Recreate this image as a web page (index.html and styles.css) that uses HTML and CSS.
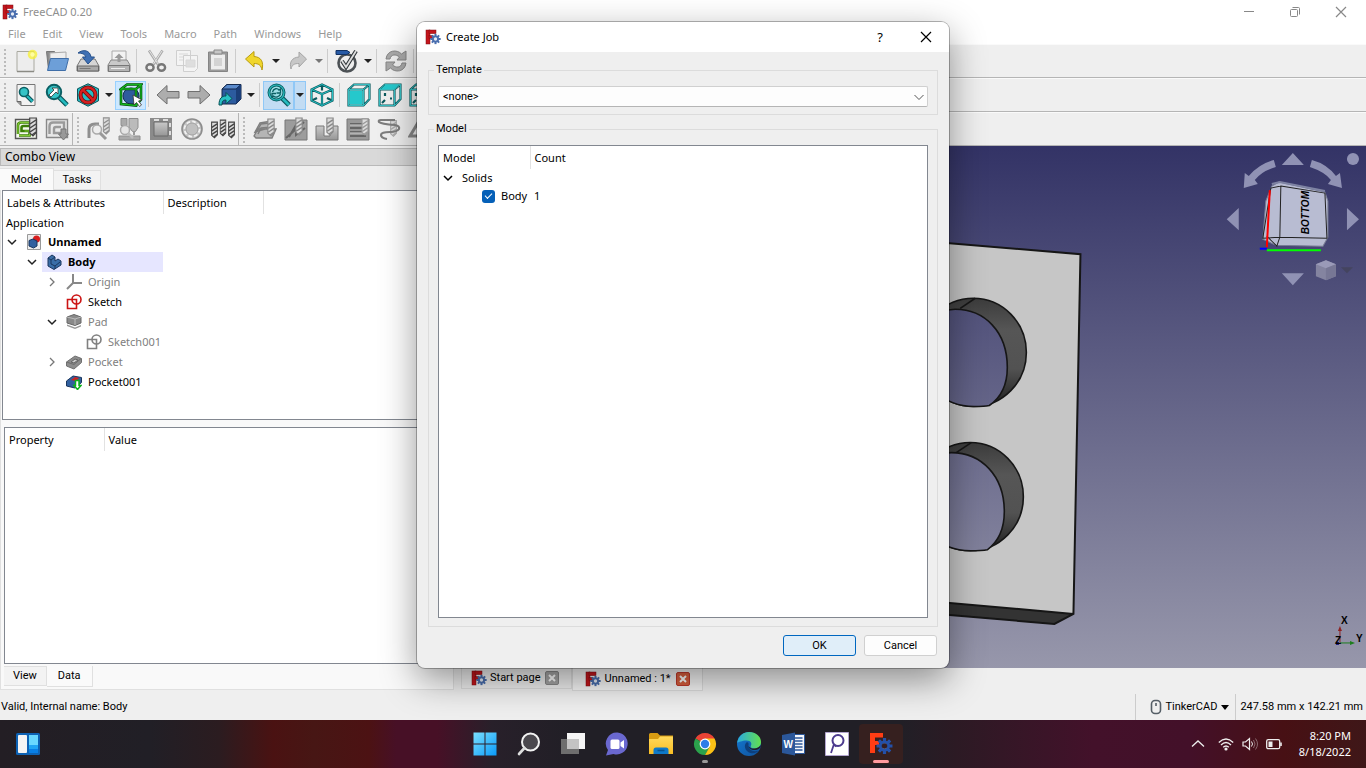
FILE: index.html
```html
<!DOCTYPE html>
<html lang="en">
<head>
<meta charset="utf-8">
<title>FreeCAD 0.20</title>
<link rel="stylesheet" href="styles.css">
</head>
<body>
<svg class="defs" aria-hidden="true">
  <defs>
    <linearGradient id="sky" gradientUnits="userSpaceOnUse" x1="0" y1="146" x2="0" y2="667"><stop offset="0" stop-color="#333366"/><stop offset="1" stop-color="#9797ab"/></linearGradient>
    <linearGradient id="wall" x1="0" y1="0" x2="0" y2="1"><stop offset="0" stop-color="#3c3c3c"/><stop offset=".3" stop-color="#565656"/><stop offset=".65" stop-color="#525252"/><stop offset="1" stop-color="#1e1e1e"/></linearGradient>
    <linearGradient id="win" x1="0" y1="0" x2="1" y2="1"><stop offset="0" stop-color="#7be0ff"/><stop offset="1" stop-color="#0a9af8"/></linearGradient>
    <linearGradient id="edgeA" x1="0" y1="0" x2="1" y2="0"><stop offset="0" stop-color="#2aa9e0"/><stop offset="1" stop-color="#62e04e"/></linearGradient>
    <linearGradient id="edgeB" x1="0" y1="0" x2="1" y2="1"><stop offset="0" stop-color="#1378d2"/><stop offset="1" stop-color="#10529c"/></linearGradient>
    <linearGradient id="folder" x1="0" y1="0" x2="0" y2="1"><stop offset="0" stop-color="#ffd95c"/><stop offset="1" stop-color="#f9bd23"/></linearGradient>
    <linearGradient id="gray" x1="0" y1="0" x2="0" y2="1"><stop offset="0" stop-color="#c9c9c9"/><stop offset="1" stop-color="#969696"/></linearGradient>
    <symbol id="gear" viewBox="0 0 16 16">
      <g stroke-width="3"><path d="M8 .5v15M.5 8h15M2.7 2.7l10.6 10.6M13.3 2.7L2.7 13.3"/></g>
      <circle cx="8" cy="8" r="5.2" fill="currentColor" stroke="none"/><circle cx="8" cy="8" r="2.4" fill="#e8edf6" stroke="none"/>
    </symbol>
    <symbol id="logo" viewBox="0 0 16 16">
      <g fill="#c4161c" stroke="#7d0b10" stroke-width=".5"><rect x="1" y="1" width="4" height="14"/><rect x="4" y="1" width="7" height="3.6"/><rect x="4" y="6.5" width="4" height="3"/></g>
      <use href="#gear" x="5" y="4.500" width="11" height="11" color="#4a6faf" stroke="#4a6faf"/>
    </symbol>
    <symbol id="mill" viewBox="0 0 8 20"><path d="M.7 1h6.600v14.500L4 19 .7 16z" fill="#dcdcdc" stroke="currentColor" stroke-width="1.200"/><path d="M1 7l6-4M1 11l6-4M1 15l6-4M3 18l4-3" stroke="currentColor" stroke-width="1.500"/></symbol>
    <symbol id="cubewire" viewBox="0 0 24 24"><path d="M1.500 6.500L12 1.500l10.500 5v11L12 22.500l-10.500-5zM1.500 6.500L12 11l10.500-4.500M12 11v11.500M12 1.500v6M3 17l4-2M21 17l-4-2" fill="none" stroke="#0b5a5e" stroke-width="2.200"/><path d="M1.500 6.500L12 1.500l10.500 5v11L12 22.500l-10.500-5zM1.500 6.500L12 11l10.500-4.500M12 11v11.500" fill="none" stroke="#25c0c4" stroke-width="1"/></symbol>
    <symbol id="boxwire" viewBox="0 0 24 24"><path d="M1.500 6.500L7 1.500h15.500v14.500l-6 6.500h-15zM1.500 6.500h15M16.500 6.500l6-5M16.500 6.500v16M7 10v3M4 20l3-3M12 15.500h2" fill="none" stroke="#0b5a5e" stroke-width="2.200"/><path d="M1.500 6.500L7 1.500h15.500v14.500l-6 6.500h-15zM1.500 6.500h15M16.500 6.500l6-5M16.500 6.500v16" fill="none" stroke="#35bcc0"/></symbol>
    <symbol id="sketch" viewBox="0 0 16 16"><path d="M1.500 5.500h9v9h-9z" fill="none" stroke="currentColor" stroke-width="1.600"/><circle cx="10.500" cy="5.500" r="4.500" fill="none" stroke="currentColor" stroke-width="1.600"/></symbol>
    <symbol id="chev-d" viewBox="0 0 10 10"><path d="M1 3l4 4 4-4" fill="none" stroke="currentColor" stroke-width="1.500"/></symbol>
    <symbol id="chev-r" viewBox="0 0 10 10"><path d="M3 1l4 4-4 4" fill="none" stroke="currentColor" stroke-width="1.300"/></symbol>
    <symbol id="close" viewBox="0 0 12 12"><path d="M1 1l10 10M11 1L1 11" stroke="currentColor" stroke-width="1.200"/></symbol>
    <symbol id="cross" viewBox="0 0 12 12"><path d="M1.500 1.500l9 9M10.500 1.500l-9 9" stroke="currentColor" stroke-width="3"/></symbol>
  </defs>
</svg>

<div class="app">
  <header class="titlebar">
    <svg class="i16"><use href="#logo"/></svg><span>FreeCAD 0.20</span>
    <div class="winbtns">
      <button type="button" aria-label="Minimize"><svg class="i12" viewBox="0 0 12 12"><path d="M1 5.500h10" stroke="currentColor"/></svg></button>
      <button type="button" aria-label="Restore"><svg class="i12" viewBox="0 0 12 12"><rect x="1.500" y="3.500" width="7" height="7" rx="1" fill="none" stroke="currentColor"/><path d="M3.500 1.500h6a1 1 0 0 1 1 1v6" fill="none" stroke="currentColor"/></svg></button>
      <button type="button" aria-label="Close"><svg class="i12"><use href="#close"/></svg></button>
    </div>
  </header>
  <nav class="menubar">
    <a href="#">File</a><a href="#">Edit</a><a href="#">View</a><a href="#">Tools</a><a href="#">Macro</a><a href="#">Path</a><a href="#">Windows</a><a href="#">Help</a>
  </nav>

  <div class="toolbar">
    <i class="grip"></i>
    <button type="button" aria-label="New"><svg viewBox="0 0 24 24"><path d="M3 2.500h17v20H3z" fill="#ededed" stroke="#a9a9a0"/><path d="M3 22.500h17" stroke="#8b8b84" stroke-width="1.500"/><circle cx="18.500" cy="5.500" r="4.800" fill="#f7f02e" opacity=".75"/><circle cx="18.500" cy="5.500" r="2.200" fill="#fffda0"/></svg></button>
    <button type="button" aria-label="Open"><svg viewBox="0 0 24 24"><path d="M1.500 2.500h8l1 1.500h10v16.500h-17z" fill="#8c8c8c" stroke="#777"/><path d="M5 4l16-1v9H5z" fill="#eee" stroke="#aaa"/><path d="M5.500 9.500h18l-3 12h-18z" fill="#6d9fd8" stroke="#3f6ea8"/></svg></button>
    <button type="button" aria-label="Save"><svg viewBox="0 0 24 24"><path d="M5 10h14l4 7v5H1v-5z" fill="#d5d5d5" stroke="#777"/><path d="M1.500 17h21v5h-21z" fill="#a9a9a9" stroke="#666"/><path d="M3.500 19.500h11" stroke="#777"/><path d="M2 4c5-4 12-3 13 4h3.500L12 15 6.500 8H10c-1-3-4-4-8-4z" fill="#3f70b4" stroke="#25508c"/></svg></button>
    <button type="button" aria-label="Print"><svg viewBox="0 0 24 24"><path d="M5 2h14v11H5z" fill="#f3f3f3" stroke="#aaa"/><path d="M4 11h16l3 5v6.500H1V16z" fill="#c9c9c9" stroke="#888"/><path d="M1.500 16.500h21v6h-21z" fill="#b4b4b4" stroke="#777"/><path d="M4 19.500h14" stroke="#eee"/><path d="M10.500 13V9H7.500L12 4.500 16.500 9h-3v4z" fill="#999"/></svg></button>
    <i class="sep"></i>
    <button type="button" aria-label="Cut"><svg viewBox="0 0 24 24"><path d="M5 1.500l9 14M18.500 1.500l-9 14" stroke="#aaa" stroke-width="2.600"/><path d="M5.500 2l8.500 13M18 2L9.500 15" stroke="#e5e5e5"/><g fill="none" stroke="#777" stroke-width="2.400"><ellipse cx="6" cy="18.500" rx="3.600" ry="3.200"/><ellipse cx="17.500" cy="18.500" rx="3.600" ry="3.200"/></g></svg></button>
    <button type="button" aria-label="Copy"><svg viewBox="0 0 24 24"><path d="M1.500 1.500h14v15h-14zM8.500 6.500h14v13l-3 3h-11z" fill="#f4f4f4" stroke="#cfcfcf"/><path d="M4 5h9M4 8h4M4 11h4M11 11h9v7h-9z" stroke="#d8d8d8" fill="#dedede"/></svg></button>
    <button type="button" aria-label="Paste"><svg viewBox="0 0 24 24"><path d="M2.500 3h19v19.500h-19z" fill="#9a9a9a" stroke="#858585"/><path d="M5 5.500h14v15H5z" fill="#ededed"/><path d="M8 1h8v4H8z" fill="#c6c6c6" stroke="#888"/><path d="M8 9h8v8H8z" fill="#d3d3d3"/></svg></button>
    <i class="sep"></i>
    <button type="button" aria-label="Undo"><svg viewBox="0 0 24 24"><path d="M2.500 10L11 2.500v5c7 .5 10 5 8 13.500-1-5-3.500-6.500-8-6.500V18z" fill="#f0d62c" stroke="#b89c10"/></svg></button><button type="button" class="drop" aria-label="Undo list"></button>
    <button type="button" aria-label="Redo"><svg viewBox="0 0 24 24"><path d="M20.500 10L13 3v5c-7 .5-10 5-8 12 1-4.500 3.500-5.500 8-5.500V18z" fill="#c7c7c7" stroke="#a5a5a5"/></svg></button><button type="button" class="drop dim" aria-label="Redo list"></button>
    <i class="sep"></i>
    <button type="button" aria-label="Path check"><svg viewBox="0 0 24 24"><circle cx="12" cy="14" r="8.500" fill="#eee" stroke="#4c5155" stroke-width="2.600"/><path d="M1 1.500h11l3 2-3 2H1z" fill="#2659a5" stroke="#123263"/><path d="M7 12l4 6L21 2" fill="none" stroke="#30363a" stroke-width="4"/><path d="M7 12l4 6L21 2" fill="none" stroke="#ddd" stroke-width="1.800"/></svg></button><button type="button" class="drop" aria-label="Check options"></button>
    <i class="sep"></i>
    <button type="button" aria-label="Refresh"><svg viewBox="0 0 24 24"><path d="M2 10C3 1 13 0 17.500 5L22 2v9h-9l2.500-3C12 5 7 5 6 10zM22 14c-1 9-11 10-15.500 5L2 22v-9h9l-2.500 3c3.500 3 8.500 3 9.500-2z" fill="#a9a9a9" stroke="#858585"/></svg></button>
    <i class="sep"></i>
  </div>

  <div class="toolbar">
    <i class="grip"></i>
    <button type="button" aria-label="Fit all"><svg viewBox="0 0 24 24"><path d="M3 1.500h18v21H7l-4-4z" fill="#f2f2f2" stroke="#777"/><path d="M3 18.500h4v4" fill="#999" stroke="#666"/><path d="M12.500 12.500l6 6" stroke="#0a5257" stroke-width="4"/><path d="M12.500 12.500l6 6" stroke="#24b9bd" stroke-width="2"/><circle cx="10" cy="9" r="4.500" fill="#35c3c6" stroke="#0a5f63" stroke-width="1.600"/></svg></button>
    <button type="button" aria-label="Fit selection"><svg viewBox="0 0 24 24"><path d="M13 13l9 9" stroke="#0a5257" stroke-width="5"/><path d="M13 13l9 9" stroke="#24b9bd" stroke-width="2.600"/><circle cx="9" cy="9" r="7.200" fill="#35c3c6" stroke="#0a5f63" stroke-width="2"/><path d="M4 12l5-5-2-2h6v6l-2-2-5 5z" fill="#fff" stroke="#333" stroke-width=".8"/></svg></button>
    <button type="button" aria-label="Draw style"><svg viewBox="0 0 24 24"><path d="M12 .8l10.500 5v12L12 23.200 1.500 17.800v-12z" fill="#28bcc4" stroke="#0a5257"/><circle cx="12" cy="12" r="7.500" fill="none" stroke="#6b0909" stroke-width="4"/><path d="M6.700 6.700l10.600 10.600" stroke="#6b0909" stroke-width="4"/><circle cx="12" cy="12" r="7.500" fill="none" stroke="#d62020" stroke-width="2.400"/><path d="M6.700 6.700l10.600 10.600" stroke="#d62020" stroke-width="2.400"/></svg></button><button type="button" class="drop" aria-label="Draw style list"></button>
    <button type="button" class="on light" aria-label="Bounding box"><svg viewBox="0 0 24 24"><circle cx="12" cy="13" r="8" fill="#2f5b9d" stroke="#142c55"/><path d="M2 6l6-4.500h14L17 6zM2 6v15l15 1.500V6M22 1.500v15l-5 6" fill="none" stroke="#063f0a" stroke-width="2.600"/><path d="M2 6l6-4.500h14L17 6zM2 6v15l15 1.500V6M22 1.500v15l-5 6" fill="none" stroke="#12b51e" stroke-width="1.400"/><path d="M14 12l9 5-3.500 1 3 4-2 1.500-3-4-2.500 2.500z" fill="#fff" stroke="#333" stroke-width=".8"/></svg></button>
    <i class="sep"></i>
    <button type="button" aria-label="Back"><svg viewBox="0 0 24 24"><path d="M1 12l10-9.500v6h12v6.500H11v6z" fill="#adadad" stroke="#6f6f6f"/></svg></button>
    <button type="button" aria-label="Forward"><svg viewBox="0 0 24 24"><path d="M23 12L13 2.500v6H1v6.500h12v6z" fill="#adadad" stroke="#6f6f6f"/></svg></button>
    <button type="button" aria-label="Linked object"><svg viewBox="0 0 24 24"><path d="M4 6l5-4.500h14V16l-5 5H4z" fill="#2c5b9f" stroke="#14294d"/><path d="M4 6l5-4.500h14L18 6z" fill="#5a8acb" stroke="#14294d"/><path d="M18 6v15l5-5V1.500z" fill="#1b3e78"/><path d="M1 22c0-7 3-9 7-9v-3.500l6 6-6 5.500v-4c-3 0-4 1-4 5z" fill="#28c0c4" stroke="#075054"/></svg></button><button type="button" class="drop" aria-label="Link list"></button>
    <i class="sep"></i>
    <button type="button" class="on" aria-label="Zoom"><svg viewBox="0 0 24 24"><path d="M14 14l8 8" stroke="#0a5257" stroke-width="5"/><path d="M14 14l8 8" stroke="#24b9bd" stroke-width="2.600"/><circle cx="9.500" cy="9.500" r="7.500" fill="#9edfe6" stroke="#0a5f63" stroke-width="3"/><circle cx="9.500" cy="9.500" r="7.500" fill="none" stroke="#2bbcc0" stroke-width="1.200"/><path d="M5.500 9c1-4 5-4 6.500-2l1.500-1v4h-4M13.500 11c-1 3-5 4-7 2L5 14v-3.500h4" fill="none" stroke="#0a5f63" stroke-width="1.300"/></svg></button><button type="button" class="drop on" aria-label="Zoom list"></button>
    <button type="button" aria-label="Isometric"><svg><use href="#cubewire"/></svg></button>
    <i class="sep"></i>
    <button type="button" aria-label="Front"><svg viewBox="0 0 24 24"><use href="#boxwire"/><path d="M2.500 7.500h13v14h-13z" fill="#25c8cc"/></svg></button>
    <button type="button" aria-label="Top"><svg viewBox="0 0 24 24"><use href="#boxwire"/><path d="M3 6l4.500-4H21l-4.500 4z" fill="#25c8cc"/></svg></button>
    <button type="button" aria-label="Right"><svg><use href="#boxwire"/></svg></button>
  </div>

  <div class="toolbar">
    <div class="group">
      <i class="grip"></i>
      <button type="button" aria-label="Job"><svg viewBox="0 0 24 24"><path d="M1.500 2.500h21v19h-21z" fill="#f5f9ee" stroke="#555" stroke-width="1.400"/><path d="M4 17V8.500Q4 5.500 7 5.500h9v3.500H9.500q-2 0-2 2V14h8v4.500H5" fill="none" stroke="#3b7d06" stroke-width="2.600"/><path d="M4 17V8.500Q4 5.500 7 5.500h9M5 18.500h10.500V14h-5" fill="none" stroke="#80c834" stroke-width="1.200"/><use href="#mill" x="15" y="0" width="8" height="20" color="#444"/></svg></button>
      <button type="button" aria-label="Post process"><svg viewBox="0 0 24 24"><path d="M1.500 2.500h21v18h-21z" fill="#e8e8e8" stroke="#888" stroke-width="1.400"/><path d="M4.500 17V9q0-3.500 3.500-3.500h11V16H9v-4q0-2 2-2h5" fill="none" stroke="#9a9a9a" stroke-width="2.400"/><path d="M16 12h5v5h2.500L18.500 23 13.500 17H16z" fill="#999" stroke="#777"/></svg></button>
    </div>
    <div class="group">
      <i class="grip"></i>
      <button type="button" aria-label="Inspect"><svg viewBox="0 0 24 24"><path d="M2 21V12q0-5 6-5h4" fill="none" stroke="#8f8f8f" stroke-width="3"/><use href="#mill" x="15.500" y="0" width="7.500" height="18" color="#8f8f8f"/><circle cx="10" cy="12.500" r="4.500" fill="#eee" stroke="#aaa" stroke-width="1.500"/><path d="M13 16l6 6" stroke="#999" stroke-width="3"/></svg></button>
      <button type="button" aria-label="Simulator"><svg viewBox="0 0 24 24"><path d="M3 1.500h6v7H3zM1 19h21v4H1z" fill="#aaa" stroke="#8f8f8f"/><path d="M11 1.500h9v9l-2.500 4h-3L11 10z" fill="#bbb" stroke="#8f8f8f"/><path d="M16 14v4" stroke="#999" stroke-width="2"/><circle cx="7" cy="13" r="4.500" fill="#e5e5e5" stroke="#aaa" stroke-width="1.500"/><path d="M10 16l5 5" stroke="#bbb" stroke-width="2.500"/></svg></button>
      <button type="button" aria-label="Profile"><svg viewBox="0 0 24 24"><path d="M1 1h22v22H1z" fill="#8b8b8b"/><path d="M5 5h14v14H5z" fill="url(#gray)" stroke="#6b6b6b"/><path d="M5 3h5M14 3h5M21 6v4M21 14v4" stroke="#ddd" stroke-width="2"/></svg></button>
      <button type="button" aria-label="Pocket shape"><svg viewBox="0 0 24 24"><circle cx="12" cy="12" r="10" fill="#c4c4c4" stroke="#8d8d8d" stroke-width="1.600"/><circle cx="12" cy="12" r="7.500" fill="none" stroke="#f2f2f2" stroke-width="1.800" stroke-dasharray="3.600 2.290"/><circle cx="12" cy="12" r="6" fill="#c0c0c0" stroke="#a5a5a5"/></svg></button>
      <button type="button" aria-label="Drilling"><svg viewBox="0 0 24 24"><use href="#mill" x="0" y="3" width="7" height="20" color="#444"/><use href="#mill" x="8.500" y="1" width="7" height="20" color="#444"/><use href="#mill" x="17" y="3" width="7" height="20" color="#444"/></svg></button>
    </div>
    <div class="group last">
      <i class="grip"></i>
      <button type="button" aria-label="Face"><svg viewBox="0 0 24 24"><path d="M1 19l4-7h18l-4 9H3zM2 15L7 6l12-2-3 7z" fill="#b5b5b5" stroke="#7f7f7f" stroke-width="1.400"/><path d="M4 14L8 7l8-1M5 17l3-6 12-1" fill="none" stroke="#7f7f7f" stroke-width="1.400"/><use href="#mill" x="14" y="1" width="8" height="19" color="#888"/></svg></button>
      <button type="button" aria-label="Helix"><svg viewBox="0 0 24 24"><path d="M1 3h22v20H1z" fill="#9c9c9c" stroke="#777"/><path d="M2 21L20 5M5 20l7-12v10l9-7" stroke="#666" stroke-width="2" fill="none"/><use href="#mill" x="11" y="0" width="8" height="19" color="#888"/></svg></button>
      <button type="button" aria-label="Plunge"><svg viewBox="0 0 24 24"><path d="M1 9h8v10h6V9h8v14H1z" fill="url(#gray)" stroke="#777"/><use href="#mill" x="11" y="0" width="8" height="19" color="#888"/></svg></button>
      <button type="button" aria-label="Engrave"><svg viewBox="0 0 24 24"><path d="M1 2h22v21H1z" fill="#999" stroke="#777"/><path d="M4 7h13M4 11h13M4 15h16M4 19h16" stroke="#666" stroke-width="2"/><path d="M4 8h12M4 16h15" stroke="#ccc"/><use href="#mill" x="15" y="1" width="8" height="18" color="#999"/></svg></button>
      <button type="button" aria-label="Adaptive"><svg viewBox="0 0 24 24"><use href="#mill" x="13" y="2" width="7" height="19" color="#aaa"/><path d="M18 3H4q-3 0-2 2 2 2 16 3 5 1 4 4-2 3-9 3-9 0-9 3 0 3 6 4" fill="none" stroke="#7d7d7d" stroke-width="2.200"/></svg></button>
      <button type="button" aria-label="Slot"><svg viewBox="0 0 24 24"><path d="M2 19L11 4l11 15z" fill="none" stroke="#888" stroke-width="3"/></svg></button>
    </div>
  </div>

  <main class="work">
    <section class="combo">
      <h2>Combo View</h2>
      <div class="tabs"><button type="button" class="tab active">Model</button><button type="button" class="tab">Tasks</button></div>
      <div class="frame">
        <div class="box tree">
          <table>
            <colgroup><col class="c-label"><col class="c-desc"><col></colgroup>
            <thead><tr><th>Labels &amp; Attributes</th><th>Description</th><th></th></tr></thead>
            <tbody>
              <tr class="root"><td>Application</td></tr>
              <tr class="bold l0"><td><div><svg class="i10"><use href="#chev-d"/></svg><svg class="i16" viewBox="0 0 16 16"><path d="M1.500.5h13v15h-13z" fill="#eee" stroke="#999"/><circle cx="10.500" cy="5" r="3.500" fill="#d81e1e"/><path d="M3 6.500L7 5l4 2v5l-3.500 2L3 12z" fill="#31609f" stroke="#1a365e"/></svg><span>Unnamed</span></div></td></tr>
              <tr class="bold l1"><td><div><svg class="i10"><use href="#chev-d"/></svg><span class="picked"><svg class="i16" viewBox="0 0 16 16"><path d="M2 4l4-3 3 2v4l3-2 3 2v4l-7 4.500L2 12z" fill="#3a6ea8" stroke="#1a365e"/><path d="M2 4l3 2v4l4 2 5-4M9 15v-3M5 6l4-3" fill="none" stroke="#1a365e"/></svg><span>Body</span></span></div></td></tr>
              <tr class="dim l2"><td><div><svg class="i10 mid"><use href="#chev-r"/></svg><svg class="i16" viewBox="0 0 16 16"><path d="M7 0v9M7 9h9M7 9l-6 6" fill="none" stroke="#888" stroke-width="2"/></svg><span>Origin</span></div></td></tr>
              <tr class="l2"><td><div><i class="i10"></i><svg class="i16 red"><use href="#sketch"/></svg><span>Sketch</span></div></td></tr>
              <tr class="dim l2"><td><div><svg class="i10"><use href="#chev-d"/></svg><svg class="i16" viewBox="0 0 16 16"><path d="M1 3l7-2.500L15 3v6l-6 2.500L1 9z" fill="#8a8a8a" stroke="#666"/><path d="M1 3l8 2 6-2M9 5v6" fill="none" stroke="#bbb"/><path d="M1 12l8 3 6-2.500V11l-6 2.500L1 10.500z" fill="#999"/></svg><span>Pad</span></div></td></tr>
              <tr class="dim l3"><td><div><i class="i10"></i><svg class="i16"><use href="#sketch"/></svg><span>Sketch001</span></div></td></tr>
              <tr class="dim l2"><td><div><svg class="i10 mid"><use href="#chev-r"/></svg><svg class="i16" viewBox="0 0 16 16"><path d="M.5 8L9 2l6.500 2.500v4L8 15 .5 12z" fill="#8d8d8d" stroke="#707070"/><path d="M5 8l4-3 3 1-4 3z" fill="#ccc" stroke="#666"/><path d="M.5 8L8 10.500l7-6" fill="none" stroke="#6d6d6d"/></svg><span>Pocket</span></div></td></tr>
              <tr class="l2"><td><div><i class="i10"></i><svg class="i16" viewBox="0 0 16 16"><path d="M.5 7L7 2l8.500 1.500v5L9 14 .5 12z" fill="#31609f" stroke="#1a365e"/><path d="M5 6l4-3 4 1-3 3z" fill="#c22"/><path d="M9.500 6.500h3.500v5h2L11.500 15.500 8 11.500h1.500z" fill="#fff" stroke="#0db31b" stroke-width="1.500"/></svg><span>Pocket001</span></div></td></tr>
            </tbody>
          </table>
        </div>
        <div class="props">
          <div class="box">
            <table>
              <colgroup><col class="c-prop"><col></colgroup>
              <thead><tr><th>Property</th><th>Value</th></tr></thead>
            </table>
          </div>
          <div class="tabs bottom"><button type="button" class="tab">View</button><button type="button" class="tab active">Data</button></div>
        </div>
      </div>
    </section>

    <section class="mdi">
      <div class="view">
      <svg class="scene" viewBox="458 146 908 521" preserveAspectRatio="xMaxYMin slice">
        <rect x="458" y="146" width="908" height="521" fill="url(#sky)"/>
        <path d="M700 222L1081 254 1074 613 700 580z" fill="#c6c6c6"/>
        <path d="M700 580L1074 613 1055 623 700 593z" fill="#333"/>
        <path d="M700 222L1081 254 1074 613 1055 623 700 593M1074 613L700 580" fill="none" stroke="#161616" stroke-width="2"/>
        <g stroke="#161616" stroke-width="1.600">
          <ellipse cx="974" cy="352" rx="53" ry="54" fill="url(#wall)"/>
          <path d="M990 405c13-9 18-22 18-38 0-36-23-58-52-58-20 0-36 18-36 44 0 30 24 53 55 53 6 0 10 0 15-1z" fill="url(#sky)"/>
          <path d="M961 308l15-10" fill="none"/>
          <ellipse cx="971" cy="496" rx="53" ry="54" fill="url(#wall)"/>
          <path d="M988 549c12-9 17-22 17-38 0-36-23-59-53-59-20 0-36 18-36 44 0 30 24 54 55 54 6 0 12 0 17-1z" fill="url(#sky)"/>
          <path d="M957 452l15-10" fill="none"/>
        </g>
        <g fill="#9092b4">
          <path d="M1282 165h22l-11-12zM1282 273h22l-11 12zM1239 208v22l-12-11zM1347 208v22l12-11z"/>
          <circle cx="1353" cy="159" r="6"/>
          <path d="M1274 160l2 7q-14 4-21 13l3 4-14 4 1-15 4 3q10-12 25-16zM1312 160l-2 7q15 5 21 13l-3 4 14 4-2-15-4 3q-9-12-24-16z"/>
        </g>
        <path d="M1279 182l46 10 3 9v36l-5 9-47-1-13-6 3-38 6-15z" fill="#b8bcd2" stroke="#777c94"/>
        <path d="M1281 186l44 7 2 45-47-1zM1281 186l-10 2-8 50 17-1M1280 237l-3 9-10-10" fill="none" stroke="#222"/>
        <path d="M1272 184l8-2 45 9" fill="none" stroke="#7e83a3" stroke-width="2"/>
        <path d="M1270 190l-3 57" stroke="#f00" stroke-width="2"/><path d="M1267 250h54" stroke="#0f0" stroke-width="2"/><path d="M1260 248.500h7" stroke="#00f" stroke-width="2"/>
        <text class="cube-text" transform="translate(1309 234) rotate(-90)">BOTTOM</text>
        <path d="M1316 264l10-4 10 4v12l-10 4-10-4z" fill="#8484a0"/><path d="M1316 264l10-4 10 4-10 4z" fill="#9a9ab8"/><path d="M1326 268v12l10-4v-12z" fill="#777795"/>
        <path d="M1341 267h12l-6 6z" fill="#44445f"/>
        <path d="M1340 641v-12" stroke="#8c2323"/><path d="M1338 630h4l-2-5z" fill="#8c2323"/><path d="M1340 642h11" stroke="#1d7d1d"/><path d="M1350 640v4l5-2z" fill="#1d7d1d"/><rect x="1336" y="641" width="3" height="3" fill="#1c1c80"/>
        <g class="axis"><text x="1341" y="623">X</text><text x="1356" y="641">Y</text><text x="1335" y="643">Z</text></g>
      </svg>
      </div>
      <div class="doctabs">
        <div class="doctab"><svg class="i16"><use href="#logo"/></svg><span>Start page</span><button type="button" aria-label="Close Start page"><svg><use href="#cross"/></svg></button></div>
        <div class="doctab active"><svg class="i16"><use href="#logo"/></svg><span>Unnamed : 1*</span><button type="button" class="hot" aria-label="Close Unnamed"><svg><use href="#cross"/></svg></button></div>
      </div>
    </section>
  </main>

  <footer class="status">
    <span class="msg">Valid, Internal name: Body</span>
    <button type="button" class="nav"><svg viewBox="0 0 12 16"><rect x="1.500" y="1.500" width="9" height="13" rx="3.500" fill="none" stroke="#555e66" stroke-width="1.600"/><path d="M6 4v3" stroke="#555e66" stroke-width="1.600"/></svg>TinkerCAD<i class="tri"></i></button>
    <span class="dims">247.58 mm x 142.21 mm</span>
  </footer>
</div>

<dialog class="dialog" open aria-labelledby="dlg-title">
  <div class="dlg-title"><svg class="i16"><use href="#logo"/></svg><span id="dlg-title">Create Job</span>
    <button type="button" class="help">?</button><button type="button" aria-label="Close"><svg class="i12"><use href="#close"/></svg></button></div>
  <form class="dlg-body">
    <fieldset>
      <legend>Template</legend>
      <div class="select"><select aria-label="Template"><option>&lt;none&gt;</option></select><svg class="i12" viewBox="0 0 12 12"><path d="M1.500 4l4.500 4.500L10.500 4" fill="none" stroke="#555"/></svg></div>
    </fieldset>
    <fieldset class="grow">
      <legend>Model</legend>
      <div class="box">
        <table class="models">
          <colgroup><col class="c-model"><col></colgroup>
          <thead><tr><th>Model</th><th>Count</th></tr></thead>
          <tbody>
            <tr><td><div class="solids"><svg class="i10"><use href="#chev-d"/></svg><span>Solids</span></div></td><td></td></tr>
            <tr><td><label class="check"><input type="checkbox" checked><span>Body</span></label></td><td>1</td></tr>
          </tbody>
        </table>
      </div>
    </fieldset>
    <div class="actions"><button type="button" class="primary">OK</button><button type="button">Cancel</button></div>
  </form>
</dialog>

<nav class="taskbar">
  <div class="side"><button type="button" aria-label="Widgets"><svg viewBox="0 0 24 24"><rect y="1" width="24" height="22" rx="1.500" fill="#0d62b4"/><rect x="2" y="3" width="9" height="18" rx="1" fill="#f4f4f4"/><rect x="13" y="3" width="9" height="10" fill="#69d8ff"/><rect x="13" y="13" width="9" height="4" fill="#20a5f4"/><rect x="13" y="17" width="9" height="4" fill="#087fe6"/></svg></button></div>
  <div class="apps">
    <button type="button" aria-label="Start"><svg viewBox="0 0 24 24"><path d="M.5.500h11v11H.5zM12.500.500h11v11h-11zM.5 12.500h11v11H.5zM12.500 12.500h11v11h-11z" fill="url(#win)"/></svg></button>
    <button type="button" aria-label="Search"><svg viewBox="0 0 24 24"><circle cx="13.500" cy="10" r="8.500" fill="#4b484e" stroke="#f2f2f2" stroke-width="2"/><path d="M7.500 16L2 22" stroke="#ddd" stroke-width="2.600" stroke-linecap="round"/></svg></button>
    <button type="button" aria-label="Task view"><svg viewBox="0 0 24 24"><path d="M6 1h18v16H6z" fill="#f5f5f5"/><path d="M0 7h18v15H0z" fill="#777" opacity=".9"/><path d="M6 7h12v10H6z" fill="#c3c3c3"/></svg></button>
    <button type="button" aria-label="Chat"><svg viewBox="0 0 24 24"><path d="M12.500.500a11 11 0 1 1-4 21.500L1 23.500 3 18A11 11 0 0 1 12.500.500z" fill="#6a68cf"/><rect x="5.500" y="7.500" width="9" height="9.500" rx="1.500" fill="#fff"/><path d="M15.500 10.500l3.500-2.500v8.500L15.500 14z" fill="#fff"/></svg></button>
    <button type="button" aria-label="File Explorer"><svg viewBox="0 0 24 24"><path d="M0 2.500Q0 1 1.500 1h7l2.500 2.500h13V10H0z" fill="#d89c12"/><path d="M0 7h9l2-2.500h13V22H0z" fill="url(#folder)"/><path d="M4.500 22v-4q0-2.500 2.500-2.500h10q2.500 0 2.500 2.500v4z" fill="#0e79c9"/><path d="M8.500 18.500h7" stroke="#07538f" stroke-width="1.500"/></svg></button>
    <button type="button" aria-label="Chrome" class="running"><svg viewBox="0 0 24 24"><path d="M12 12L2.470 6.500A11 11 0 0 1 21.530 6.500z" fill="#ea4335"/><path d="M12 12L2.470 6.500A11 11 0 0 0 12 23l4.800-8z" fill="#2ba24c"/><path d="M12 12l4.500 3L12 23A11 11 0 0 0 21.530 6.500H12z" fill="#fbc116"/><circle cx="12" cy="12" r="5.400" fill="#fff"/><circle cx="12" cy="12" r="4.200" fill="#2f7de8"/></svg></button>
    <button type="button" aria-label="Edge"><svg viewBox="0 0 24 24"><circle cx="12" cy="12" r="12" fill="url(#edgeB)"/><path d="M.2 10.500C1.500 4 6.500 0 12 0c7 0 12 4.500 12 10 0 4-3 6.500-6.500 6.500-3 0-4.500-1.500-3.500-3 1-2 0-5-4.500-5C5 8.500 1.500 10.500.2 10.500z" fill="url(#edgeA)"/><path d="M10 10c-4 3-2 9.500 3.500 11 3.500.8 6.500-.5 8.500-2.500-6 2-10.500-1-10.500-4.500 0-2 .8-3-1.500-4z" fill="#0d3f7d"/><path d="M24 13c0 3-3 5-6.500 5s-6-2-6-4c0 0 1.500 3 6 2.500s6.500-3.500 6.500-3.500z" fill="#211f26"/></svg></button>
    <button type="button" aria-label="Word"><svg viewBox="0 0 24 24"><path d="M12 2.500h11.500v19H12z" fill="#f4f6fa" stroke="#2b579a"/><path d="M14 6h7.500M14 9h7.500M14 12h7.500M14 15h7.500M14 18h7.500" stroke="#2b579a" stroke-width="1.300"/><path d="M1 3L14 .5v23L1 21z" fill="#2b579a"/><text class="word" x="2.500" y="16">W</text></svg></button>
    <button type="button" aria-label="Finder"><svg viewBox="0 0 24 24"><path d="M.5.500h23v23H.5z" fill="#fff" stroke="#b3a5cf"/><circle cx="13" cy="8.500" r="5.500" fill="none" stroke="#4c3a8e" stroke-width="2"/><path d="M9 12l-3 9M9 13l2.500 1.500" stroke="#4c3a8e" stroke-width="1.800" fill="none"/></svg></button>
    <button type="button" aria-label="FreeCAD" class="current"><svg viewBox="0 0 24 24"><g fill="#ff3d14"><rect x="1" y="1" width="5" height="20"/><rect x="5" y="1" width="9" height="4.500"/><rect x="5" y="9" width="5" height="4"/></g><g color="#2450a8" stroke="#2450a8"><use href="#gear" x="7" y="5.500" width="17" height="17"/></g><circle cx="15.500" cy="14" r="2.800" fill="#321c22"/></svg></button>
  </div>
  <div class="tray">
    <svg class="i16" viewBox="0 0 16 16"><path d="M2 10.500l6-5.500 6 5.500" fill="none" stroke="#eee" stroke-width="1.300"/></svg>
    <svg class="i16" viewBox="0 0 16 16"><g fill="none" stroke="#eee" stroke-width="1.300"><path d="M.8 6.500q7.200-7 14.400 0M3 9q5-5 10 0M5.200 11.300q2.800-2.600 5.600 0"/></g><circle cx="8" cy="13" r="1.600" fill="#eee"/></svg>
    <svg class="i16" viewBox="0 0 16 16"><path d="M1 6h2.500L7.500 2.500v11L3.500 10H1z" fill="none" stroke="#eee" stroke-width="1.200"/><path d="M9.500 5.500q2 2.500 0 5" fill="none" stroke="#eee"/><path d="M11.500 4q3 4 0 8M13.500 2.500q4 5.500 0 11" fill="none" stroke="#8a6b70"/></svg>
    <svg class="i16" viewBox="0 0 16 16"><rect x=".7" y="3.700" width="13" height="9" rx="1.500" fill="none" stroke="#eee" stroke-width="1.300"/><rect x="2.500" y="5.500" width="4" height="5.500" fill="#eee"/><path d="M15 6.500v3.500" stroke="#eee" stroke-width="1.600"/></svg>
    <div class="clock"><div>8:20 PM</div><div>8/18/2022</div></div>
  </div>
</nav>
</body>
</html>
```
FILE: styles.css
```css
* { box-sizing: border-box; }
html, body { height: 100%; margin: 0; }
body {
  display: flex; flex-direction: column; overflow: hidden; position: relative;
  background: #efefef; color: #000;
  font: 11px/16px "Noto Sans", "Open Sans", sans-serif;
}
button { font: inherit; color: inherit; background: none; border: 0; padding: 0; margin: 0; }
.defs { position: absolute; width: 0; height: 0; }
svg { display: block; flex: none; }
.i10 { width: 10px; height: 10px; flex: none; }
.i12 { width: 12px; height: 12px; }
.i16 { width: 16px; height: 16px; }

.app { flex: 1; min-height: 0; display: flex; flex-direction: column; }

.titlebar { display: flex; align-items: center; gap: 5px; height: 23px; padding-left: 2px; background: #fff; color: #8f8f8f; }
.winbtns { margin-left: auto; display: flex; }
.winbtns button { width: 46px; height: 22px; display: grid; place-items: center; color: #888; }
.winbtns button:last-child { margin-right: 2px; }
.menubar { display: flex; gap: 17px; height: 21px; align-items: center; padding-left: 8px; background: #fff; }
.menubar a { color: #999; text-decoration: none; }

.toolbar { display: flex; height: 34px; border-top: 1px solid #fafafa; border-bottom: 1px solid #b5b5b5; align-items: center; }
.toolbar button { width: 31px; height: 29px; display: grid; place-items: center; flex: none; border: 1px solid transparent; }
.toolbar button svg { width: 24px; height: 24px; }
.toolbar .drop { width: 12px; }
.toolbar .drop::before { content: ""; border: 4px solid transparent; border-top-color: #222; border-bottom: 0; }
.toolbar .drop.dim::before { border-top-color: #777; }
.toolbar .on { background: #c2dcf3; border-color: #90c8f6; }
.toolbar .on.light { background: #cce8ff; border-color: #99d1ff; }
.grip { width: 10px; height: 27px; flex: none; background: linear-gradient(#bbb 2px, transparent 2px) 4px 1px / 2px 4px repeat-y; }
.sep { width: 6px; height: 24px; flex: none; border-left: 1px solid #ccc; margin-left: 2px; margin-right: -2px; }
.group { display: flex; align-items: center; height: 100%; border-right: 1px solid #b5b5b5; }
.group.last { border: 0; }

.work { flex: 1; min-height: 0; display: flex; gap: 4px; padding-top: 2px; }
.combo { flex: 0 0 454px; display: flex; flex-direction: column; padding-bottom: 2px; }
.combo h2 { margin: 0; font-size: 12px; font-weight: 400; line-height: 16px; background: #d9d9d9; border: 1px solid #b9b9b9; padding: 0 4px; }
.tabs { display: flex; align-items: flex-end; margin-top: 2px; }
.tab { height: 20px; padding: 0 9px; background: #f3f3f3; border: 1px solid #e0e0e0; border-left: 0; }
.tab.active { height: 22px; background: #fafafa; border-bottom: 0; padding: 0 11px; }
.tab, .doctab, .status, legend, select, .actions { font-family: Roboto, "Open Sans", sans-serif; font-size: 11px; }
.frame { flex: 1; min-height: 0; display: flex; flex-direction: column; gap: 7px; background: #f9f9f9; border: 1px solid #e0e0e0; border-top: 0; padding-left: 1px; }
.box { background: #fff; border: 1px solid #828790; }
.tree { flex: 0 0 230px; }
.props { flex: 1; min-height: 0; display: flex; flex-direction: column; padding-left: 2px; }
.props .box { flex: 1; }
.tabs.bottom { align-items: flex-start; margin: 2px 0; }
.tabs.bottom .tab.active { border: 1px solid #e0e0e0; border-top: 0; border-left: 0; height: 21px; }

table { width: 100%; table-layout: fixed; border-collapse: collapse; }
th, td { padding: 0 0 0 4px; text-align: left; font-weight: inherit; white-space: nowrap; vertical-align: middle; }
th { height: 23px; border-right: 1px solid #e2e2e2; font-weight: 400; }
th:last-child { border-right: 0; }
.c-label { width: 160px; }
.c-desc { width: 100px; }
.c-prop { width: 99px; }
.tree td { height: 20px; padding: 0; }
.tree .root td { height: 18px; padding-left: 3px; }
.tree td div { display: flex; align-items: center; gap: 8px; height: 20px; }
.tree td div > .i16, .picked .i16 { margin-right: -2px; }
.tree .i10 { color: #222; margin-right: 1px; }
.tree .i10.mid { color: #777; }
.l0 div { padding-left: 4px; }
.l1 div { padding-left: 24px; }
.l2 div { padding-left: 44px; }
.l3 div { padding-left: 64px; }
.bold { font-weight: 700; }
.dim { color: #808080; }
.red { color: #cc1414; }
.picked { flex: 1; display: flex; align-items: center; gap: 8px; height: 20px; background: #e6e6ff; margin-left: -4px; padding-left: 4px; }

.mdi { flex: 1; min-width: 0; display: flex; flex-direction: column; margin-top: -2px; }
.view { flex: 1; min-height: 0; overflow: hidden; }
.scene { width: 100%; height: 100%; }
.cube-text { font: italic 700 10px "Liberation Sans", sans-serif; }
.axis { font: 700 10px "Liberation Sans", sans-serif; }
.doctabs { display: flex; height: 24px; padding-left: 3px; align-items: flex-start; }
.doctab { display: flex; align-items: center; gap: 3px; height: 21px; padding: 0 12px 0 9px; border: 1px solid #ddd; border-top: 0; }
.doctab.active { height: 23px; background: #f6f6f6; padding-left: 12px; gap: 4px; }
.doctab button { width: 14px; height: 14px; margin-left: 1px; display: grid; place-items: center; background: #a5a5a5; border: 1px solid #888; border-radius: 2px; color: #fff; }
.doctab button svg { width: 8px; height: 8px; }
.doctab .hot { background: #d9603f; border-color: #c0392b; }

.status { display: flex; align-items: center; height: 28px; padding: 2px 3px 0 1px; }
.msg { flex: 1; }
.nav { display: flex; align-items: center; gap: 4px; height: 26px; padding: 0 6px 0 14px; border-left: 1px solid #ccc; }
.nav svg { width: 12px; height: 16px; }
.tri { border: 4px solid transparent; border-top: 5px solid #000; border-bottom: 0; }
.dims { border-left: 1px solid #ccc; padding-left: 4px; line-height: 26px; }

.dialog {
  position: absolute; inset: 22px auto 100px 417px; width: 532px; height: auto; margin: 0; padding: 0;
  display: flex; flex-direction: column; overflow: hidden; color: #000;
  background: #efefef; border: 0; border-radius: 8px;
  box-shadow: 0 0 0 1px rgba(0,0,0,.28), 0 12px 36px rgba(0,0,0,.42);
}
.dlg-title { display: flex; align-items: center; height: 30px; padding-left: 8px; background: #fff; }
.dlg-title span { flex: 1; padding-left: 5px; }
.dlg-title button { width: 46px; height: 30px; display: grid; place-items: center; }
.dlg-title .help { font-size: 13px; }
.dlg-body { flex: 1; min-height: 0; display: flex; flex-direction: column; padding: 10px 11px 12px; }
fieldset { min-width: 0; margin: 0 0 6px; padding: 8px 9px 7px; border: 1px solid #dcdcdc; }
fieldset.grow { flex: 1; min-height: 0; margin-bottom: 8px; padding-bottom: 8px; }
fieldset.grow .box { height: 100%; }
legend { margin-left: -4px; padding: 0 2px; line-height: 16px; }
.select { position: relative; }
.select svg { position: absolute; right: 3px; top: 5px; pointer-events: none; }
select { display: block; width: 100%; height: 21px; appearance: none; color: inherit; padding: 0 4px; background: #fdfdfd; border: 1px solid #d0d0d0; border-bottom-color: #b5b5b5; border-radius: 2px; }
.c-model { width: 91px; }
.models td { height: 18px; padding-left: 4px; }
.solids { display: flex; align-items: center; gap: 9px; }
.check { display: flex; align-items: center; gap: 6px; padding-left: 39px; }
.check input { appearance: none; width: 13px; height: 13px; margin: 0; flex: none; background: #0560b8; border-radius: 3px; display: grid; place-items: center; }
.check input::before { content: ""; width: 6px; height: 3px; border: solid #fff; border-width: 0 0 1px 1px; transform: rotate(-45deg); margin-bottom: 2px; }
.actions { display: flex; justify-content: flex-end; gap: 8px; padding-right: 1px; }
.actions button { width: 73px; height: 21px; background: #fdfdfd; border: 1px solid #d0d0d0; border-radius: 3px; }
.actions .primary { background: #e0eef9; border-color: #0067c0; }

.taskbar {
  position: relative; height: 48px; flex: none; display: grid; grid-template-columns: 1fr auto 1fr; align-items: center; color: #fff;
  background: linear-gradient(90deg, #231e24 0%, #211f26 11%, #2b1c20 16%, #4a1212 20%, #471614 23%, #4c1213 27%, #471026 29%, #471026 32%, #28202a 36%, #211f26 42%, #211f26 66%, #2c1a24 70%, #43112a 80%, #431029 87%, #471014 94%, #3f1718 100%);
}
.side { padding-left: 6px; }
.apps { display: flex; align-items: center; }
.taskbar button { width: 44px; height: 48px; display: grid; place-items: center; position: relative; }
.taskbar button svg { width: 24px; height: 24px; }
.running::after, .current::after { content: ""; position: absolute; bottom: 5px; width: 6px; height: 3px; border-radius: 2px; background: #999; }
.taskbar .current { height: 40px; background: #36201f; border-radius: 4px; }
.taskbar .current::after { bottom: 1px; width: 16px; background: #ff9a9f; }
.word { font: 700 10px "Liberation Sans", sans-serif; fill: #fff; }
.tray { display: flex; align-items: center; justify-content: flex-end; gap: 8px; padding-right: 15px; }
.tray .i16:first-child { margin-right: 4px; }
.clock { text-align: right; padding-left: 9px; }
```
